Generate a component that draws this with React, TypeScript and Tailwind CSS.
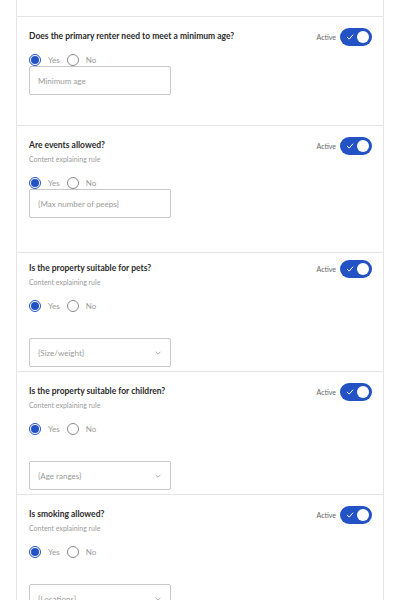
import React from "react";

const BLUE = "bg-[#2352c4]";

const Toggle = () => {
  return (
    <div className="flex items-center gap-[4px] shrink-0">
      <span className="text-[7px] leading-[10px] text-[#666]">Active</span>
      <div className={`relative flex h-[18px] w-8 items-center rounded-full ${BLUE}`}>
        <svg
          viewBox="0 0 10 10"
          className="absolute left-[6px] top-[5px] h-[8px] w-[8px]"
          fill="none"
          stroke="white"
          strokeWidth="1.2"
          strokeLinecap="round"
          strokeLinejoin="round"
        >
          <path d="M1.5 5.2 L4 7.6 L8.6 2.4" />
        </svg>
        <div className="absolute right-[3px] top-[3px] h-3 w-3 rounded-full bg-white" />
      </div>
    </div>
  );
};

const Radios = ({ className }: { className: string }) => {
  return (
    <div className={`flex h-3 items-center text-[8px] leading-3 text-[#999] ${className}`}>
      <div className="flex h-3 w-3 items-center justify-center rounded-full border border-[#2352c4] bg-white">
        <div className={`h-2 w-2 rounded-full ${BLUE}`} />
      </div>
      <span className="ml-[7px]">Yes</span>
      <div className="ml-[7px] h-3 w-3 rounded-full border border-[#8a8a8a]" />
      <span className="ml-[7px]">No</span>
    </div>
  );
};

const Field = ({
  text,
  select,
  className,
}: {
  text: string;
  select?: boolean;
  className?: string;
}) => {
  return (
    <div
      className={`flex h-[29px] w-[142px] items-center justify-between rounded-[2px] border border-[#c8c8c8] pl-2 pr-[9px] text-[8px] text-[#9a9a9a] ${className ?? ""}`}
    >
      <span>{text}</span>
      {select && (
        <svg viewBox="0 0 10 6" className="h-[4px] w-[6px]" fill="none" stroke="#888" strokeWidth="1.2">
          <path d="M1 1 L5 5 L9 1" />
        </svg>
      )}
    </div>
  );
};

type Rule = {
  title: string;
  sub?: string;
  field: string;
  select?: boolean;
  pt: string;
  radioMt: string;
  fieldMt: string;
  pb: string;
};

const rules: Rule[] = [
  {
    title: "Does the primary renter need to meet a minimum age?",
    field: "Minimum age",
    pt: "pt-[11px]",
    radioMt: "mt-[8px]",
    fieldMt: "mt-0",
    pb: "pb-[30px]",
  },
  {
    title: "Are events allowed?",
    sub: "Content explaining rule",
    field: "{Max number of peeps}",
    pt: "pt-[11px]",
    radioMt: "mt-[13px]",
    fieldMt: "mt-0",
    pb: "pb-[34px]",
  },
  {
    title: "Is the property suitable for pets?",
    sub: "Content explaining rule",
    field: "{Size/weight}",
    select: true,
    pt: "pt-[7px]",
    radioMt: "mt-[13px]",
    fieldMt: "mt-[26px]",
    pb: "pb-[4px]",
  },
  {
    title: "Is the property suitable for children?",
    sub: "Content explaining rule",
    field: "{Age ranges}",
    select: true,
    pt: "pt-[11px]",
    radioMt: "mt-[13px]",
    fieldMt: "mt-[26px]",
    pb: "pb-[4px]",
  },
  {
    title: "Is smoking allowed?",
    sub: "Content explaining rule",
    field: "{Locations}",
    select: true,
    pt: "pt-[11px]",
    radioMt: "mt-[13px]",
    fieldMt: "mt-[26px]",
    pb: "pb-[4px]",
  },
];

const App = () => {
  return (
    <div
      className="min-h-[600px] w-[400px] overflow-hidden bg-white px-4"
      style={{ fontFamily: 'Lato, "Open Sans", sans-serif' }}
    >
      <div className="border-x border-[#e4e4e4]">
        <div className="h-[17px] border-b border-[#e4e4e4]" />
        {rules.map((rule, index) => (
          <div
            key={index}
            className={`border-b border-[#e4e4e4] pl-3 pr-[11px] ${rule.pt} ${rule.pb}`}
          >
            <div className="flex items-start justify-between">
              <div className="flex flex-col">
                <div className="mt-[2px] text-[8.5px] font-bold leading-3 text-[#2b2b2b]">
                  {rule.title}
                </div>
                {rule.sub && (
                  <div className="mt-[3px] text-[7px] leading-[10px] text-[#9a9a9a]">
                    {rule.sub}
                  </div>
                )}
              </div>
              <Toggle />
            </div>
            <Radios className={rule.radioMt} />
            <Field text={rule.field} select={rule.select} className={rule.fieldMt} />
          </div>
        ))}
      </div>
    </div>
  );
};

export default App;
